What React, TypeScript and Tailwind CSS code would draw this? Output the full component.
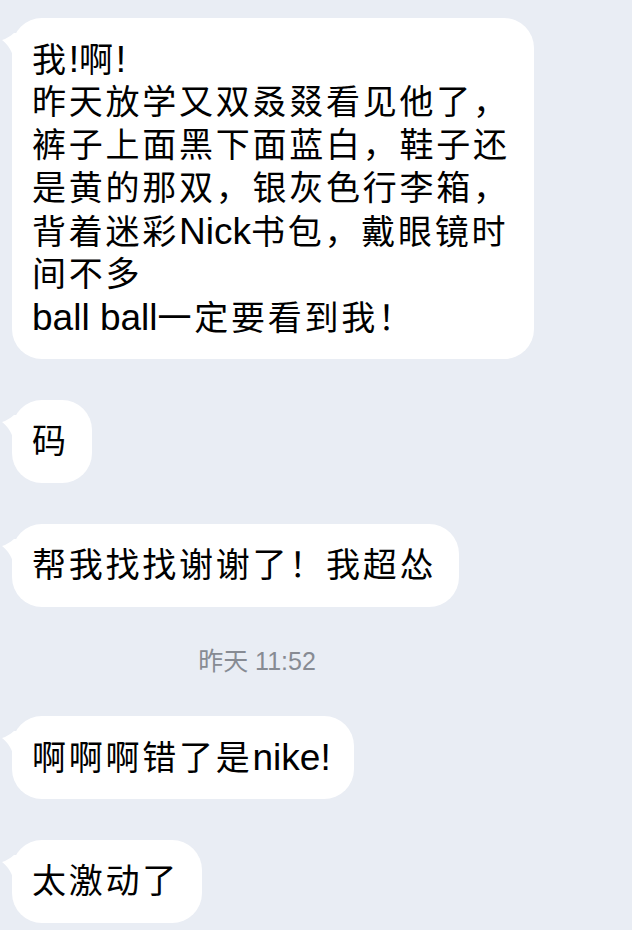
import React from "react";

const FONT = { fontFamily: '"Liberation Sans", "Noto Sans CJK SC", sans-serif' };

function Tail() {
  return (
    <svg
      className="absolute left-[-11px] top-[15px]"
      width="18"
      height="26"
      viewBox="0 0 18 26"
    >
      <path d="M13 0 C9 3.5 5 5.8 1 7 C5 10 10 15 13 26 L18 26 L18 0 Z" fill="#ffffff" />
    </svg>
  );
}

function Txt({ s }: { s: string }) {
  const parts = s.split(/([A-Za-z!:0-9 ]+)/).filter((p) => p.length > 0);
  return (
    <>
      {parts.map((p, i) =>
        /^[A-Za-z!:0-9 ]+$/.test(p) ? (
          <span key={i} className="text-[37px] tracking-normal">{p}</span>
        ) : (
          <span key={i} className="text-[34px] tracking-[2.75px]">{p}</span>
        )
      )}
    </>
  );
}

function Bubble({ children, className = "" }: { children: React.ReactNode; className?: string }) {
  return (
    <div className={"relative self-start bg-white rounded-[30px] pl-[20px] pr-[23px] py-[20px] leading-[43px] text-black whitespace-nowrap " + className}>
      <Tail />
      {children}
    </div>
  );
}

export default function App() {
  const lines = [
    "我!啊!",
    "昨天放学又双叒叕看见他了，",
    "裤子上面黑下面蓝白，鞋子还",
    "是黄的那双，银灰色行李箱，",
    "背着迷彩Nick书包，戴眼镜时",
    "间不多",
    "ball ball一定要看到我！",
  ];
  return (
    <div className="w-[632px] h-[930px] bg-[#e9edf4] overflow-hidden" style={FONT}>
      <div className="flex flex-col pt-[18px] pl-[12px]">
        <Bubble className="w-[522px]">
          {lines.map((l, i) => (
            <div key={i} className="h-[43px]"><Txt s={l} /></div>
          ))}
        </Bubble>
        <Bubble className="mt-[41px]"><div className="h-[43px]"><Txt s="码" /></div></Bubble>
        <Bubble className="mt-[41px]"><div className="h-[43px]"><Txt s="帮我找找谢谢了！我超怂" /></div></Bubble>
        <div className="mt-[39px] mb-[40px] w-[490px] text-center text-[25px] leading-[30px] text-[#878b93]">
          昨天 11:52
        </div>
        <Bubble><div className="h-[43px]"><Txt s="啊啊啊错了是nike!" /></div></Bubble>
        <Bubble className="mt-[41px]"><div className="h-[43px]"><Txt s="太激动了" /></div></Bubble>
      </div>
    </div>
  );
}
